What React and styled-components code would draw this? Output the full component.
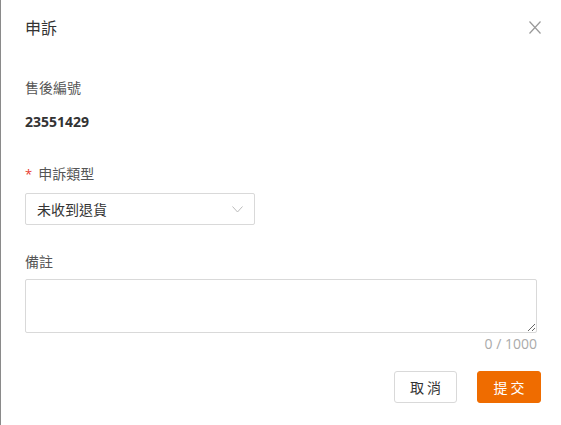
import React, { useState } from 'react';
import styled, { createGlobalStyle } from 'styled-components';

const GlobalStyle = createGlobalStyle`
  html, body {
    margin: 0;
    padding: 0;
    background: #8a8a8a;
  }
  body {
    font-family: "Open Sans", "Noto Sans CJK TC", sans-serif;
    color: #333;
  }
`;

const Page = styled.div`
  width: 561px;
  height: 425px;
  display: flex;
  padding-left: 1px;
  box-sizing: border-box;
`;

const Dialog = styled.div`
  flex: 1;
  background: #fff;
  display: flex;
  flex-direction: column;
  padding: 16px 20px 0 24px;
  box-sizing: border-box;
`;

const Header = styled.div`
  display: flex;
  justify-content: space-between;
  align-items: center;
  height: 22px;
`;

const Title = styled.h2`
  margin: 0;
  font-size: 16px;
  font-weight: 400;
  color: #333;
`;

const CloseButton = styled.button`
  border: 0;
  background: none;
  padding: 0;
  width: 12px;
  height: 13px;
  cursor: pointer;
  display: flex;
  margin-right: 0;
`;

const Field = styled.div`
  display: flex;
  flex-direction: column;
  margin-top: ${(p) => p.$top}px;
`;

const Label = styled.div`
  font-size: 14px;
  line-height: 20px;
  color: #555;
  display: flex;
  align-items: center;
  gap: 6px;
`;

const Required = styled.span`
  color: #e8382e;
  font-size: 13px;
`;

const Value = styled.div`
  margin-top: 14px;
  font-size: 14px;
  font-weight: 700;
  color: #333;
  line-height: 20px;
`;

const Select = styled.div`
  margin-top: 9px;
  width: 230px;
  height: 32px;
  border: 1px solid #d9d9d9;
  border-radius: 2px;
  box-sizing: border-box;
  display: flex;
  align-items: center;
  justify-content: space-between;
  padding: 0 11px 0 11px;
  font-size: 14px;
  color: #333;
`;

const TextArea = styled.textarea`
  margin-top: 7px;
  width: 512px;
  height: 54px;
  border: 1px solid #d9d9d9;
  border-radius: 2px;
  box-sizing: border-box;
  resize: vertical;
  font-family: inherit;
  font-size: 14px;
  outline: none;
`;

const Counter = styled.div`
  width: 512px;
  text-align: right;
  font-size: 14px;
  color: #aaa;
  line-height: 20px;
  margin-top: 1px;
`;

const Footer = styled.div`
  display: flex;
  justify-content: flex-end;
  gap: 20px;
  margin-top: 17px;
  width: 516px;
`;

const Button = styled.button`
  height: 32px;
  width: ${(p) => (p.$primary ? 64 : 63)}px;
  border-radius: 3px;
  border: 1px solid ${(p) => (p.$primary ? '#ef6c00' : '#d9d9d9')};
  background: ${(p) => (p.$primary ? '#ef6c00' : '#fff')};
  color: ${(p) => (p.$primary ? '#fff' : '#333')};
  font-family: inherit;
  font-size: 14px;
  letter-spacing: 3px;
  padding: 0 0 0 3px;
  cursor: pointer;
`;

export default function App() {
  const [note, setNote] = useState('');
  return (
    <Page>
      <GlobalStyle />
      <Dialog>
        <Header>
          <Title>申訴</Title>
          <CloseButton aria-label="close">
            <svg width="12" height="13" viewBox="0 0 12 13">
              <path d="M0.5 0.5 L11.5 12.5 M11.5 0.5 L0.5 12.5" stroke="#999" strokeWidth="1.2" fill="none" />
            </svg>
          </CloseButton>
        </Header>

        <Field $top={40}>
          <Label>售後編號</Label>
          <Value>23551429</Value>
        </Field>

        <Field $top={32}>
          <Label>
            <Required>*</Required>
            申訴類型
          </Label>
          <Select>
            <span>未收到退貨</span>
            <svg width="11" height="7" viewBox="0 0 11 7">
              <path d="M0.5 0.5 L5.5 6 L10.5 0.5" stroke="#bbb" strokeWidth="1" fill="none" />
            </svg>
          </Select>
        </Field>

        <Field $top={27}>
          <Label>備註</Label>
          <TextArea value={note} onChange={(e) => setNote(e.target.value)} />
          <Counter>{note.length} / 1000</Counter>
        </Field>

        <Footer>
          <Button>取消</Button>
          <Button $primary>提交</Button>
        </Footer>
      </Dialog>
    </Page>
  );
}
